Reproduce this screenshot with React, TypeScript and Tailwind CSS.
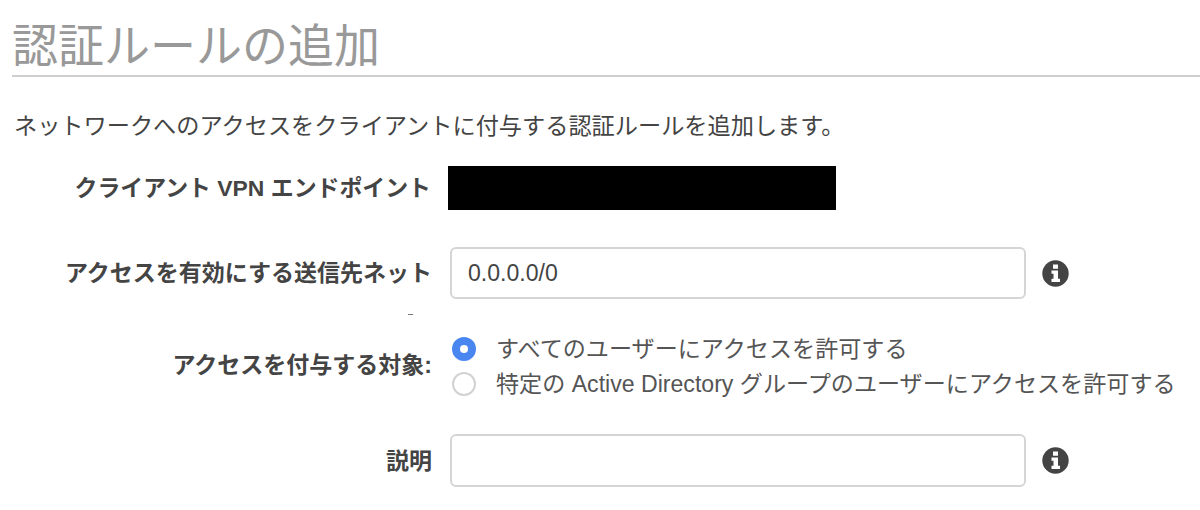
const font = "font-['Liberation_Sans','Noto_Sans_CJK_JP',sans-serif]";

function Info() {
  return (
    <span className="ml-[16px] flex h-[27px] w-[27px] items-center justify-center">
      <svg width="27" height="27" viewBox="0 0 27 27">
        <circle cx="13.5" cy="13.5" r="13.2" fill="#444444" />
        <path d="M11 4.5h5v4.2h-5z M9.5 10.5h6.5v8.2h2v3.3H9.5v-3.3h2v-4.9h-2z" fill="#ffffff" />
      </svg>
    </span>
  );
}

function Radio({ checked }: { checked?: boolean }) {
  return checked ? (
    <span className="flex h-[24px] w-[24px] shrink-0 items-center justify-center rounded-full bg-[#4a86f0]">
      <span className="h-[8px] w-[8px] rounded-full bg-white" />
    </span>
  ) : (
    <span className="h-[24px] w-[24px] shrink-0 rounded-full border-2 border-[#d2d2d2] bg-white" />
  );
}

function Label({ children }: { children: string }) {
  return <div className="w-[432px] shrink-0 text-right text-[23px] font-bold leading-[30px] text-[#444444]">{children}</div>;
}

export default function App() {
  return (
    <div className={`${font} relative h-[510px] w-[1200px] overflow-hidden bg-white pl-[12px]`}>
      <h1 className="h-[77px] border-b-2 border-[#cfcfcf] pt-[16px] text-[46px] font-normal leading-[60px] text-[#999999]">
        認証ルールの追加
      </h1>
      <p className="mt-[34px] pl-[2px] text-[23.2px] leading-[30px] text-[#444444]">
        ネットワークへのアクセスをクライアントに付与する認証ルールを追加します。
      </p>
      <div className="-ml-[12px]">
        <div className="mt-[25px] flex h-[44px] items-center">
          <div className="w-[431px] shrink-0 text-right text-[22.9px] font-bold leading-[30px] text-[#444444]">クライアント VPN エンドポイント</div>
          <div className="ml-[17px] h-[44px] w-[388px] bg-black" />
        </div>
        <div className="mt-[37px] flex h-[52px] items-center">
          <Label>アクセスを有効にする送信先ネット</Label>
          <div className="ml-[18px] flex h-[52px] w-[576px] items-center rounded-[6px] border-2 border-[#d5d5d5] bg-white pl-[16px] text-[23.1px] text-[#444444]">
            0.0.0.0/0
          </div>
          <Info />
          <span className="absolute left-[408px] top-[314px] h-px w-[5px] bg-[#777777]" />
        </div>
        <div className="mt-[38px] flex items-start">
          <div className="pt-[13px]"><Label>アクセスを付与する対象:</Label></div>
          <div className="ml-[20px] flex flex-col gap-[11px] text-[23.1px] leading-[24px] text-[#555555]">
            <div className="flex items-center gap-[20px]"><Radio checked /><span>すべてのユーザーにアクセスを許可する</span></div>
            <div className="flex items-center gap-[20px]"><Radio /><span>特定の Active Directory グループのユーザーにアクセスを許可する</span></div>
          </div>
        </div>
        <div className="mt-[38px] flex h-[53px] items-center">
          <Label>説明</Label>
          <div className="ml-[18px] h-[53px] w-[576px] rounded-[6px] border-2 border-[#d5d5d5] bg-white" />
          <Info />
        </div>
      </div>
    </div>
  );
}
